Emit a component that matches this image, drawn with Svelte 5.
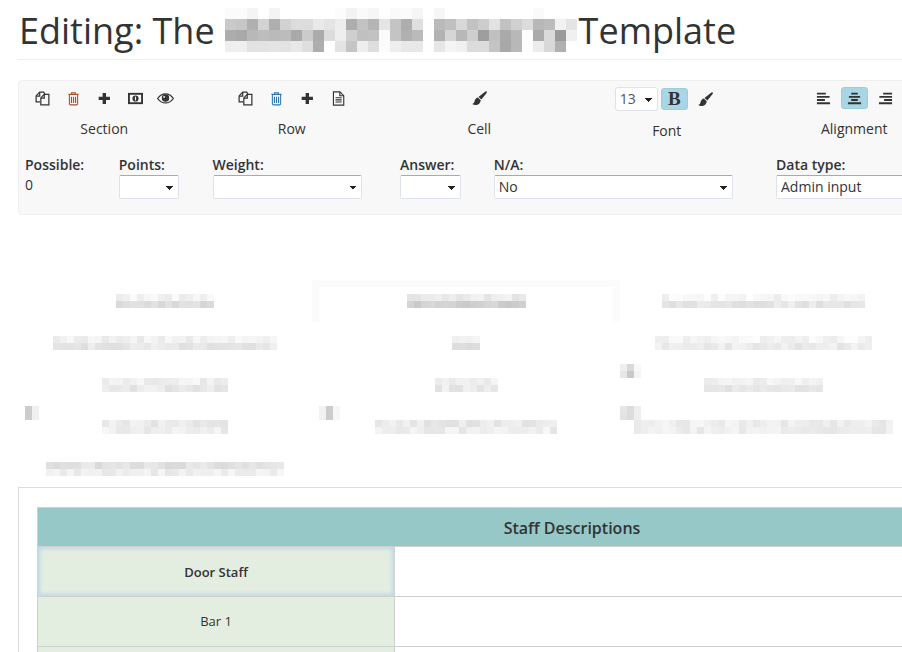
<script>
  // seeded noise so the redacted blocks stay the same between renders
  const noise = seed => {
    let s = seed;
    return () => {
      s = (s * 16807) % 2147483647;
      return s / 2147483647;
    };
  };

  const grey = v => {
    const c = Math.max(0, Math.min(255, Math.round(v)));
    return `rgb(${c},${c},${c})`;
  };

  const titleRows = [
    'fb fb f4 ff f4 ff ff ff ff ff fc f3 fa f6 fe fa fb f5 ff f6 ff ff ff ff ff ff ff ff fa ff ff ff',
    'c9 c6 b0 d3 ae d2 dc dc e9 e4 ed ad c2 b5 e5 c4 ae df fe ba c0 d8 c2 cc e2 c2 d0 dc b8 bc f2 e4',
    'ad a9 b8 bd ba bc a9 cb ab dc ee cf c0 c2 fb c4 b0 ba fe b2 d6 b8 ce 9e c0 aa b8 fd ab da 9a f0',
    'ee ef e2 e2 e4 e2 e8 de ae ff e3 c5 ee de fc ee e8 e8 fe e6 f4 f0 dc dc c4 a8 b8 fe ec d8 b0 ff'
  ].map(r => r.split(' ').map(h => `#${h}${h}${h}`));

  // one blurred tab label: two rows of 7px squares
  const blurred = (width, seed, top, bottom) => {
    const rand = noise(seed * 1237);
    rand();
    const cols = Math.round(width / 7);
    return [top, bottom].map(base =>
      Array.from({ length: cols }, () => grey(base + (rand() - 0.5) * 18))
    );
  };

  const tabs = [
    [{ w: 98, t: 243, b: 222 }, { w: 119, t: 236, b: 208, active: true }, { w: 203, t: 245, b: 230 }],
    [{ w: 224, t: 241, b: 231 }, { w: 28, t: 245, b: 228 }, { w: 217, t: 245, b: 235 }],
    [{ w: 126, t: 240, b: 233 }, { w: 63, t: 241, b: 233 }, { w: 119, t: 241, b: 233 }],
    [{ w: 126, t: 234, b: 238 }, { w: 182, t: 233, b: 238 }, { w: 259, t: 238, b: 238 }],
    [{ w: 238, t: 226, b: 238 }]
  ].map((row, i) =>
    row.map((tab, j) => ({ ...tab, rows: blurred(tab.w, 97 + i * 31 + j * 7, tab.t, tab.b) }))
  );

  const strays = [
    { cls: 's1', rows: [['#cccccc', '#f0f0f0'], ['#cccccc', '#f0f0f0']] },
    { cls: 's2', rows: [['#f2f2f2', '#cccccc', '#f6f6f6'], ['#f2f2f2', '#cccccc', '#f6f6f6']] },
    { cls: 's3', rows: [['#eeeeee', '#d8d8d8', '#f8f8f8'], ['#e6e6e6', '#c8c8cc', '#f4f4f4']] },
    { cls: 's4', rows: [['#e6e6e6', '#dcdcdc', '#eeeeee'], ['#e2e2e2', '#dcdcdc', '#eeeeee']] }
  ];
</script>

{#snippet copy()}
  <svg class="ico" viewBox="0 0 16 16" fill="none" stroke="currentColor" stroke-width="1.300">
    <path d="M5.500 11.500H1.200V5.200L5 1.200h4.300l1.200 2" />
    <path d="M1.400 5.400H5V1.400" />
    <path d="M6.200 14.800V7.400l3.600-3.800h5v11.200z" />
    <path d="M6.400 7.600h3.500V3.800" />
  </svg>
{/snippet}

{#snippet trash()}
  <svg class="ico" viewBox="0 0 16 16" fill="none" stroke="currentColor" stroke-width="1.100">
    <path d="M2.500 3.500h11M6 3.300V1.800h4v1.500" />
    <path d="M3.600 3.700v10.200l1 .9h6.800l1-.9V3.700z" />
    <path d="M5.800 6v6.800M8 6v6.800M10.200 6v6.800" stroke-width="1.200" />
  </svg>
{/snippet}

{#snippet plus()}
  <svg class="ico" viewBox="0 0 16 16" fill="currentColor">
    <path d="M6 2h3.600v4.200h4.200v3.400H9.600v4.200H6V9.600H1.800V6.200H6z" />
  </svg>
{/snippet}

{#snippet money()}
  <svg class="ico" viewBox="0 0 16 16" fill="none" stroke="currentColor">
    <rect x="1" y="3" width="14" height="10" stroke-width="2" />
    <circle cx="8" cy="8" r="3.300" fill="currentColor" stroke="none" />
    <path d="M8 6v4" stroke="#f8f8f8" stroke-width="1.200" />
  </svg>
{/snippet}

{#snippet eye()}
  <svg class="ico eye" viewBox="0 0 16 16" fill="none" stroke="currentColor">
    <path d="M.6 8C2.600 5 5.200 3.600 8 3.600s5.400 1.400 7.400 4.400c-2 2.800-4.600 4.200-7.400 4.200S2.600 10.800.6 8z" stroke-width="1.200" />
    <circle cx="8" cy="7.600" r="3.500" fill="currentColor" stroke="none" />
    <circle cx="6.700" cy="6.500" r=".9" fill="#f8f8f8" stroke="none" />
  </svg>
{/snippet}

{#snippet file()}
  <svg class="ico" viewBox="0 0 16 16" fill="none" stroke="currentColor" stroke-width="1.200">
    <path d="M2.600 .9h6.900L13.600 5v10.100h-11z" />
    <path d="M9.400 1.100v4h4" />
    <path d="M4.800 7.200h6.600M4.800 9.400h6.600M4.800 11.700h6.600" />
  </svg>
{/snippet}

{#snippet brush()}
  <svg class="ico" viewBox="0 0 16 16" fill="currentColor">
    <path d="M15.600.6c.5.500.2 1.200-.2 1.700L10 9.100 6.900 6.300 13.600 1c.7-.5 1.500-.9 2-.4z" />
    <path d="M6.200 7 9.300 9.800c-.2 2.600-2 4.700-4.600 5-1.500.2-3.300-.1-4.400-1 1.500-.3 2-1.200 2.300-2.500C2.900 9.300 4.200 7.400 6.200 7z" />
  </svg>
{/snippet}

{#snippet align(d)}
  <svg class="ico" viewBox="0 0 16 16" fill="none" stroke="currentColor" stroke-width="2">
    <path {d} />
  </svg>
{/snippet}

{#snippet mosaic(rows, size)}
  <span class="mosaic" style="grid-template-columns: repeat({rows[0].length}, {size}px); grid-auto-rows: {size}px">
    {#each rows as row}
      {#each row as colour}
        <i style="background: {colour}"></i>
      {/each}
    {/each}
  </span>
{/snippet}

<div class="page">
  <h1 class="title">
    <span>Editing: The</span>
    <span class="title-blur">{@render mosaic(titleRows, 11)}</span>
    <span>Template</span>
  </h1>

  <div class="panel">
    <div class="tools">
      <div class="group">
        <div class="icons">
          <button>{@render copy()}</button>
          <button class="orange">{@render trash()}</button>
          <button>{@render plus()}</button>
          <button>{@render money()}</button>
          <button>{@render eye()}</button>
        </div>
        <div class="caption">Section</div>
      </div>
      <div class="group">
        <div class="icons">
          <button>{@render copy()}</button>
          <button class="blue">{@render trash()}</button>
          <button>{@render plus()}</button>
          <button>{@render file()}</button>
        </div>
        <div class="caption">Row</div>
      </div>
      <div class="group">
        <div class="icons">
          <button>{@render brush()}</button>
        </div>
        <div class="caption">Cell</div>
      </div>
      <div class="group">
        <div class="icons font-icons">
          <select class="size"><option>13</option></select>
          <button class="on bold">B</button>
          <button class="brush-btn">{@render brush()}</button>
        </div>
        <div class="caption low">Font</div>
      </div>
      <div class="group">
        <div class="icons">
          <button>{@render align('M1 2.800h9.500M1 6.200h13.500M1 9.600h8.500M1 13h14')}</button>
          <button class="on">{@render align('M4.500 2.800h7M2 6.200h12M4.500 9.600h7M1 13h14')}</button>
          <button>{@render align('M5.500 2.800h9.500M1.500 6.200h13.500M6.500 9.600h8.500M1 13h14')}</button>
        </div>
        <div class="caption">Alignment</div>
      </div>
    </div>

    <div class="fields">
      <div class="field c1">
        <label for="possible">Possible:</label>
        <div id="possible" class="value">0</div>
      </div>
      <div class="field c1">
        <label for="points">Points:</label>
        <select id="points" class="w60"><option></option></select>
      </div>
      <div class="field c2">
        <label for="weight">Weight:</label>
        <select id="weight" class="w149"><option></option></select>
      </div>
      <div class="field c1">
        <label for="answer">Answer:</label>
        <select id="answer" class="w61"><option></option></select>
      </div>
      <div class="field c3">
        <label for="na">N/A:</label>
        <select id="na" class="w239"><option>No</option></select>
      </div>
      <div class="field c3 last">
        <label for="datatype">Data type:</label>
        <select id="datatype" class="w239"><option>Admin input</option></select>
      </div>
    </div>
  </div>

  <div class="tabs">
    {#each tabs as row}
      {#each row as tab}
        <div class="tab" class:active={tab.active}>{@render mosaic(tab.rows, 7)}</div>
      {/each}
      {#if row.length === 1}
        <div></div>
        <div></div>
      {/if}
    {/each}
    {#each strays as stray}
      <div class="stray {stray.cls}">{@render mosaic(stray.rows, 7)}</div>
    {/each}
  </div>

  <div class="sheet">
    <table>
      <colgroup>
        <col class="first" />
        <col />
      </colgroup>
      <thead>
        <tr><th colspan="2">Staff Descriptions</th></tr>
      </thead>
      <tbody>
        <tr><td class="name selected">Door Staff</td><td></td></tr>
        <tr><td class="name">Bar 1</td><td></td></tr>
        <tr><td class="name"></td><td></td></tr>
      </tbody>
    </table>
  </div>
</div>

<style>
  :global(body) {
    margin: 0;
    background: #fff;
  }
  .page {
    width: 902px;
    height: 652px;
    overflow: hidden;
    padding-left: 18px;
    box-sizing: border-box;
    font-family: "Open Sans", sans-serif;
    font-size: 14px;
    color: #333;
  }
  .title {
    display: flex;
    align-items: flex-start;
    width: 884px;
    height: 53px;
    margin: 0 0 20px;
    padding: 6px 0 0 1px;
    box-sizing: content-box;
    border-bottom: 1px solid #eee;
    font-size: 36px;
    font-weight: 400;
    line-height: 50px;
    white-space: nowrap;
  }
  .title-blur {
    display: block;
    width: 354px;
    margin: 2px 0 0 10px;
  }
  .mosaic {
    display: grid;
    width: max-content;
  }
  .mosaic i {
    display: block;
  }
  .panel {
    width: 1100px;
    height: 135px;
    box-sizing: border-box;
    background: #f8f8f8;
    border: 1px solid #eee;
    border-radius: 4px;
  }
  .tools {
    display: grid;
    grid-template-columns: repeat(5, 187.5px);
    margin-left: -8.500px;
    padding-top: 5px;
    height: 69px;
  }
  .group {
    text-align: center;
  }
  .icons {
    display: flex;
    justify-content: center;
    align-items: center;
    height: 24px;
  }
  button {
    display: flex;
    align-items: center;
    justify-content: center;
    width: 31px;
    height: 24px;
    padding: 0;
    border: 0;
    background: none;
    color: #333;
    font-family: inherit;
  }
  .ico {
    display: block;
    width: 15px;
    height: 15px;
  }
  .ico.eye {
    width: 17px;
    height: 17px;
    margin-left: -2px;
  }
  .orange {
    color: #a9521a;
  }
  .blue {
    color: #2f75ad;
  }
  .on {
    width: 27px;
    height: 22px;
    margin: 0 2px;
    background: #a9d6e5;
    border: 1px solid #9ccddd;
    border-radius: 3px;
  }
  .bold {
    margin: 0;
    font-family: "Liberation Serif", serif;
    font-weight: 700;
    font-size: 19px;
    line-height: 20px;
  }
  .font-icons {
    gap: 3px;
    margin-top: 1px;
    padding-left: 2px;
  }
  .brush-btn {
    width: 31px;
    margin-left: -1px;
  }
  .caption {
    margin-top: 9px;
    line-height: 20px;
  }
  .caption.low {
    margin-top: 10px;
  }
  select {
    display: block;
    height: 24px;
    box-sizing: border-box;
    padding: 0 0 1px 4px;
    appearance: none;
    background-color: #fff;
    background-image: linear-gradient(45deg, transparent 50%, #222 50%), linear-gradient(135deg, #222 50%, transparent 50%);
    background-position: calc(100% - 8px) 10px, calc(100% - 4px) 10px;
    background-size: 4px 4px;
    background-repeat: no-repeat;
    border: 1px solid #dde3e8;
    border-top-color: #aaa;
    border-radius: 2px;
    font-family: inherit;
    font-size: 14px;
    color: #333;
  }
  .size {
    width: 43px;
    border-top-color: #dde3e8;
    border-radius: 3px;
    color: #555;
  }
  .fields {
    display: grid;
    grid-template-columns: repeat(12, 93.750px);
    padding-left: 6px;
  }
  .field {
    display: flex;
    flex-direction: column;
  }
  .c1 {
    grid-column: span 1;
  }
  .c2 {
    grid-column: span 2;
  }
  .c3 {
    grid-column: span 3;
  }
  .last {
    margin-left: 1px;
  }
  label {
    font-weight: 600;
    line-height: 20px;
    height: 20px;
  }
  .value {
    line-height: 20px;
  }
  .w60 {
    width: 60px;
  }
  .w61 {
    width: 61px;
  }
  .w149 {
    width: 149px;
  }
  .w239 {
    width: 239px;
  }
  .tabs {
    position: relative;
    display: grid;
    grid-template-columns: 294px 308px 286px;
    grid-auto-rows: 42px;
    margin-top: 65px;
    width: 888px;
    height: 207px;
    box-sizing: border-box;
  }
  .tab {
    display: flex;
    justify-content: center;
    align-items: flex-start;
    padding-top: 14px;
    box-sizing: border-box;
  }
  .tab.active {
    padding-top: 7px;
    border: 7px solid #fbfbfb;
    border-bottom: 0;
  }
  .stray {
    position: absolute;
  }
  .s1 {
    left: 7px;
    top: 126px;
  }
  .s2 {
    left: 301px;
    top: 126px;
  }
  .s3 {
    left: 602px;
    top: 84px;
  }
  .s4 {
    left: 602px;
    top: 126px;
  }
  .sheet {
    width: 1200px;
    padding: 19px 18px;
    box-sizing: border-box;
    border: 1px solid #ddd;
    border-right: 0;
  }
  table {
    width: 1070px;
    table-layout: fixed;
    border-collapse: collapse;
  }
  col.first {
    width: 357px;
  }
  th {
    height: 39px;
    padding: 1px 0 0;
    box-sizing: border-box;
    background: #96c8c8;
    border: 1px solid #d0d0d0;
    font-size: 16px;
    font-weight: 600;
    text-align: center;
  }
  td {
    height: 50px;
    box-sizing: border-box;
    padding: 0 0 1px;
    border: 1px solid #d0d0d0;
    font-size: 13px;
    text-align: center;
  }
  td.name {
    background: #e4eee0;
  }
  td.selected {
    padding: 0;
    font-weight: 600;
    box-shadow: inset 0 0 4px 2px #bcd9e6;
  }
</style>
